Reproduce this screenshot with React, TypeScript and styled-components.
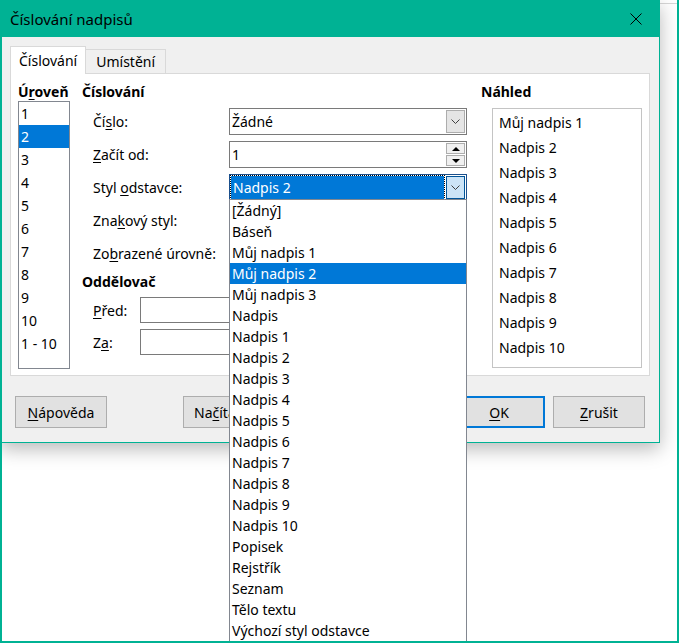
import React from "react";
import styled, { createGlobalStyle } from "styled-components";

const TEAL = "#00b294";
const SELECT = "#0078d7";

const GlobalStyle = createGlobalStyle`
  html, body {
    margin: 0;
    padding: 0;
    background: #fff;
  }
  body {
    font-family: "Noto Sans", "Liberation Sans", sans-serif;
    font-size: 14px;
    color: #000;
  }
  * {
    box-sizing: border-box;
  }
`;

const Desktop = styled.div`
  position: relative;
  width: 679px;
  height: 643px;
  overflow: hidden;
  background: #fff;
`;

const BackWindow = styled.div`
  position: absolute;
  inset: 3px 0 0 0;
  border-top: 1px solid #d6d6d6;
  background: #fff;
`;

const Frame = styled.div`
  position: absolute;
  inset: 0;
  border: 2px solid ${TEAL};
  border-top: none;
  pointer-events: none;
  z-index: 10;
`;

const Dialog = styled.div`
  position: absolute;
  left: 0;
  top: 0;
  width: 660px;
  height: 443px;
  display: flex;
  flex-direction: column;
  background: #f0f0f0;
  border: 1px solid ${TEAL};
  border-top: none;
  box-shadow: 0 6px 18px rgba(0, 0, 0, 0.28);
  z-index: 1;
`;

const TitleBar = styled.div`
  height: 37px;
  flex: none;
  display: flex;
  align-items: center;
  justify-content: space-between;
  padding-left: 9px;
  background: ${TEAL};
`;

const Title = styled.span`
  font-size: 15px;
  color: #000;
`;

const CloseButton = styled.div`
  width: 46px;
  height: 37px;
  display: flex;
  align-items: center;
  justify-content: center;
`;

const Body = styled.div`
  flex: 1;
  display: flex;
  flex-direction: column;
  padding: 9px 9px 0 9px;
`;

const TabStrip = styled.div`
  display: flex;
  align-items: flex-end;
  height: 27px;
`;

const Tab = styled.div<{ $active?: boolean }>`
  display: flex;
  align-items: center;
  height: ${(p) => (p.$active ? "28px" : "24px")};
  margin-bottom: ${(p) => (p.$active ? "-1px" : "0")};
  margin-left: ${(p) => (p.$active ? "0" : "-1px")};
  padding: 0 ${(p) => (p.$active ? "8px" : "10px")};
  background: ${(p) => (p.$active ? "#fff" : "#f0f0f0")};
  border: 1px solid #d9d9d9;
  border-bottom: none;
  position: relative;
  z-index: ${(p) => (p.$active ? 2 : 0)};
`;

const Panel = styled.div`
  height: 303px;
  display: flex;
  padding: 9px 6px 0 7px;
  background: #fff;
  border: 1px solid #d9d9d9;
`;

const Column = styled.div<{ $width: number; $gap?: number }>`
  width: ${(p) => p.$width}px;
  margin-left: ${(p) => p.$gap ?? 0}px;
  display: flex;
  flex-direction: column;
  flex: none;
`;

const Heading = styled.div<{ $top?: number }>`
  font-weight: bold;
  line-height: 18px;
  height: 18px;
  margin-top: ${(p) => p.$top ?? 0}px;
  white-space: nowrap;
`;

const U = styled.span`
  text-decoration: underline;
  text-underline-offset: 2px;
`;

const LevelList = styled.div`
  height: 268px;
  border: 1px solid #828790;
  background: #fff;
`;

const LevelItem = styled.div<{ $selected?: boolean }>`
  height: 23px;
  line-height: 23px;
  padding-left: 2px;
  background: ${(p) => (p.$selected ? SELECT : "transparent")};
  color: ${(p) => (p.$selected ? "#fff" : "#000")};
`;

const FormRows = styled.div<{ $top: number }>`
  display: flex;
  flex-direction: column;
  gap: 6px;
  margin-top: ${(p) => p.$top}px;
  padding-left: 11px;
`;

const FormRow = styled.div<{ $label: number }>`
  display: grid;
  grid-template-columns: ${(p) => p.$label}px auto;
  align-items: center;
`;

const Label = styled.span`
  white-space: nowrap;
`;

const Field = styled.div<{ $focused?: boolean; $height?: number; $width?: number }>`
  position: relative;
  display: flex;
  height: ${(p) => p.$height ?? 27}px;
  width: ${(p) => p.$width ?? 238}px;
  background: #fff;
  border: 1px solid ${(p) => (p.$focused ? "#1a4f8c" : "#7a7a7a")};
`;

const Value = styled.div<{ $focused?: boolean }>`
  flex: 1;
  display: flex;
  align-items: center;
  padding-left: 2px;
  margin: ${(p) => (p.$focused ? "1px" : "0")};
  background: ${(p) => (p.$focused ? SELECT : "transparent")};
  color: ${(p) => (p.$focused ? "#fff" : "#000")};
  outline: ${(p) => (p.$focused ? "1px dotted #000" : "none")};
  white-space: nowrap;
`;

const DropButton = styled.div<{ $focused?: boolean }>`
  width: 19px;
  display: flex;
  align-items: center;
  justify-content: center;
  margin: 1px;
  background: ${(p) => (p.$focused ? "#cce4f7" : "#e5e5e5")};
  border: 1px solid ${(p) => (p.$focused ? "#005499" : "#adadad")};
`;

const SpinButtons = styled.div`
  width: 19px;
  display: flex;
  flex-direction: column;
  margin: 1px;
  gap: 1px;
`;

const SpinButton = styled.div`
  flex: 1;
  display: flex;
  align-items: center;
  justify-content: center;
  background: #f0f0f0;
  border: 1px solid #adadad;
`;

const Popup = styled.div`
  position: absolute;
  left: -1px;
  right: -1px;
  top: calc(100% - 1px);
  height: 444px;
  background: #fff;
  border: 1px solid #828790;
  z-index: 5;
`;

const PopupItem = styled.div<{ $selected?: boolean }>`
  height: 21px;
  line-height: 21px;
  padding-left: 2px;
  white-space: nowrap;
  background: ${(p) => (p.$selected ? SELECT : "transparent")};
  color: ${(p) => (p.$selected ? "#fff" : "#000")};
`;

const PreviewBox = styled.div`
  margin: 7px 0 0 11px;
  width: 150px;
  height: 260px;
  padding: 1px 0 0 6px;
  border: 1px solid #c4c4c4;
  background: #fff;
`;

const PreviewItem = styled.div`
  line-height: 25px;
  white-space: nowrap;
`;

const ButtonRow = styled.div`
  display: flex;
  margin-top: 20px;
  padding: 0 4px 0 5px;
`;

const Button = styled.div<{ $default?: boolean; $gap?: number; $start?: boolean }>`
  width: 92px;
  height: 32px;
  margin-left: ${(p) => p.$gap ?? 0}px;
  display: flex;
  align-items: center;
  justify-content: ${(p) => (p.$start ? "flex-start" : "center")};
  padding-left: ${(p) => (p.$start ? "10px" : "0")};
  background: #e1e1e1;
  border: ${(p) => (p.$default ? `2px solid ${SELECT}` : "1px solid #adadad")};
  white-space: nowrap;
  overflow: hidden;
`;

const Chevron = () => (
  <svg width="9" height="5" viewBox="0 0 9 5">
    <path d="M0.5 0.5 L4.5 4.5 L8.5 0.5" fill="none" stroke="#404040" strokeWidth="1" />
  </svg>
);

const Triangle = ({ up }: { up?: boolean }) => (
  <svg width="8" height="4" viewBox="0 0 8 4">
    <polygon points={up ? "0,4 4,0 8,4" : "0,0 8,0 4,4"} fill="#000" />
  </svg>
);

const CloseIcon = () => (
  <svg width="12" height="12" viewBox="0 0 12 12">
    <path d="M0.5 0.5 L11.5 11.5 M11.5 0.5 L0.5 11.5" stroke="#000" strokeWidth="1" />
  </svg>
);

const levels = ["1", "2", "3", "4", "5", "6", "7", "8", "9", "10", "1 - 10"];

const paragraphStyles = [
  "[Žádný]",
  "Báseň",
  "Můj nadpis 1",
  "Můj nadpis 2",
  "Můj nadpis 3",
  "Nadpis",
  "Nadpis 1",
  "Nadpis 2",
  "Nadpis 3",
  "Nadpis 4",
  "Nadpis 5",
  "Nadpis 6",
  "Nadpis 7",
  "Nadpis 8",
  "Nadpis 9",
  "Nadpis 10",
  "Popisek",
  "Rejstřík",
  "Seznam",
  "Tělo textu",
  "Výchozí styl odstavce",
];

const preview = [
  "Můj nadpis 1",
  "Nadpis 2",
  "Nadpis 3",
  "Nadpis 4",
  "Nadpis 5",
  "Nadpis 6",
  "Nadpis 7",
  "Nadpis 8",
  "Nadpis 9",
  "Nadpis 10",
];

const Combo = ({ value, focused, children }: { value?: string; focused?: boolean; children?: React.ReactNode }) => (
  <Field $focused={focused}>
    <Value $focused={focused}>{value}</Value>
    <DropButton $focused={focused}>
      <Chevron />
    </DropButton>
    {children}
  </Field>
);

const Spin = ({ value }: { value?: string }) => (
  <Field>
    <Value>{value}</Value>
    <SpinButtons>
      <SpinButton>
        <Triangle up />
      </SpinButton>
      <SpinButton>
        <Triangle />
      </SpinButton>
    </SpinButtons>
  </Field>
);

export default function App() {
  return (
    <Desktop>
      <GlobalStyle />
      <BackWindow />
      <Dialog>
        <TitleBar>
          <Title>Číslování nadpisů</Title>
          <CloseButton>
            <CloseIcon />
          </CloseButton>
        </TitleBar>
        <Body>
          <TabStrip>
            <Tab $active>Číslování</Tab>
            <Tab>Umístění</Tab>
          </TabStrip>
          <Panel>
            <Column $width={52}>
              <Heading>
                Ú<U>r</U>oveň
              </Heading>
              <LevelList>
                {levels.map((l) => (
                  <LevelItem key={l} $selected={l === "2"}>
                    {l}
                  </LevelItem>
                ))}
              </LevelList>
            </Column>

            <Column $width={385} $gap={12}>
              <Heading>Číslování</Heading>
              <FormRows $top={7}>
                <FormRow $label={136}>
                  <Label>
                    Čí<U>s</U>lo:
                  </Label>
                  <Combo value="Žádné" />
                </FormRow>
                <FormRow $label={136}>
                  <Label>
                    <U>Z</U>ačít od:
                  </Label>
                  <Spin value="1" />
                </FormRow>
                <FormRow $label={136}>
                  <Label>
                    Styl <U>o</U>dstavce:
                  </Label>
                  <Combo value="Nadpis 2" focused>
                    <Popup>
                      {paragraphStyles.map((s) => (
                        <PopupItem key={s} $selected={s === "Můj nadpis 2"}>
                          {s}
                        </PopupItem>
                      ))}
                    </Popup>
                  </Combo>
                </FormRow>
                <FormRow $label={136}>
                  <Label>
                    Zna<U>k</U>ový styl:
                  </Label>
                  <Combo />
                </FormRow>
                <FormRow $label={136}>
                  <Label>
                    Zo<U>b</U>razené úrovně:
                  </Label>
                  <Spin />
                </FormRow>
              </FormRows>

              <Heading $top={6}>Oddělovač</Heading>
              <FormRows $top={6}>
                <FormRow $label={47}>
                  <Label>
                    <U>P</U>řed:
                  </Label>
                  <Field $height={26} $width={200} />
                </FormRow>
                <FormRow $label={47}>
                  <Label>
                    Z<U>a</U>:
                  </Label>
                  <Field $height={26} $width={200} />
                </FormRow>
              </FormRows>
            </Column>

            <Column $width={161} $gap={14}>
              <Heading>Náhled</Heading>
              <PreviewBox>
                {preview.map((p) => (
                  <PreviewItem key={p}>{p}</PreviewItem>
                ))}
              </PreviewBox>
            </Column>
          </Panel>

          <ButtonRow>
            <Button>
              <U>N</U>ápověda
            </Button>
            <Button $gap={76} $start>
              Na<U>č</U>ítat...
            </Button>
            <Button $gap={178} $default>
              <U>O</U>K
            </Button>
            <Button $gap={8}>
              <U>Z</U>rušit
            </Button>
          </ButtonRow>
        </Body>
      </Dialog>
      <Frame />
    </Desktop>
  );
}
